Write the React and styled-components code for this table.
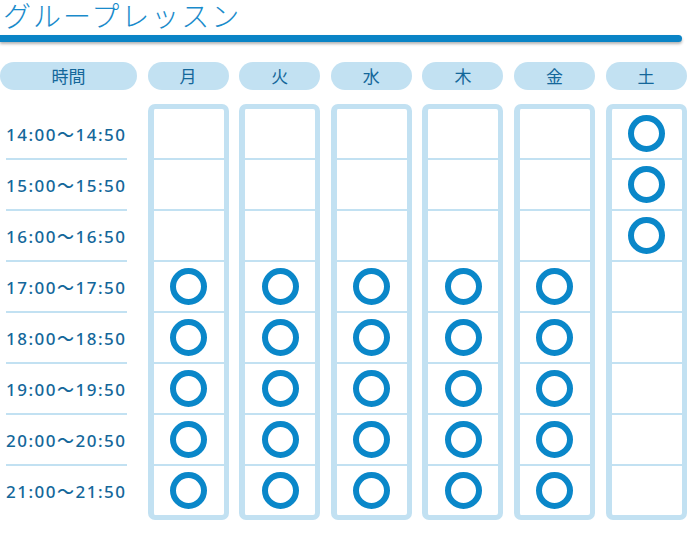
import React from 'react';
import styled, { createGlobalStyle } from 'styled-components';

const GlobalStyle = createGlobalStyle`
	body {
		margin: 0;
		background: #fff;
		font-family: "Noto Sans", "Noto Sans CJK JP", sans-serif;
	}
`;

const LIGHT = '#c2e1f2';
const BLUE = '#0a87c9';
const TEXT = '#14679a';

const Page = styled.div`
	width: 689px;
	height: 534px;
	overflow: hidden;
`;

const Title = styled.h1`
	margin: 0;
	height: 35px;
	padding-left: 3px;
	font-family: "Noto Sans CJK JP", sans-serif;
	font-weight: 300;
	font-size: 28px;
	line-height: 31px;
	letter-spacing: 2px;
	color: #1a8bcb;
	white-space: nowrap;
`;

const Bar = styled.div`
	height: 7px;
	width: 682px;
	background: #0a84c6;
	border-radius: 0 4px 4px 0;
	box-shadow: 0 2px 3px rgba(0, 0, 0, 0.3);
`;

const Grid = styled.div`
	display: grid;
	grid-template-columns: 137px repeat(6, 81px);
	column-gap: 10.6px;
`;

const HeadRow = styled(Grid)`
	margin-top: 20px;
`;

const Pill = styled.div`
	height: 28px;
	border-radius: 14px;
	background: ${LIGHT};
	color: ${TEXT};
	font-family: "Noto Sans CJK JP", sans-serif;
	font-size: 17px;
	line-height: 28px;
	text-align: center;
`;

const Body = styled(Grid)`
	margin-top: 14px;
`;

const TimeCol = styled.div`
	padding: 5px 10px 0 6px;
	display: flex;
	flex-direction: column;
`;

const TimeCell = styled.div`
	height: 49px;
	display: flex;
	align-items: center;
	font-family: "Noto Sans", "Noto Sans CJK JP", sans-serif;
	font-weight: 500;
	font-size: 17px;
	letter-spacing: 1.5px;
	color: ${TEXT};
	white-space: nowrap;
	border-bottom: ${p => (p.$last ? 'none' : `2px solid ${LIGHT}`)};
`;

const DayBox = styled.div`
	border: 5px solid ${LIGHT};
	border-left-width: 6px;
	border-right-width: 5px;
	border-radius: 7px;
	display: flex;
	flex-direction: column;
`;

const Slot = styled.div`
	height: 49px;
	display: flex;
	align-items: center;
	justify-content: center;
	border-bottom: ${p => (p.$last ? 'none' : `2px solid ${LIGHT}`)};
`;

const Ring = styled.span`
	width: 25px;
	height: 25px;
	border: 6px solid ${BLUE};
	border-radius: 50%;
`;

const times = [
	'14:00～14:50',
	'15:00～15:50',
	'16:00～16:50',
	'17:00～17:50',
	'18:00～18:50',
	'19:00～19:50',
	'20:00～20:50',
	'21:00～21:50',
];

const weekday = [false, false, false, true, true, true, true, true];
const saturday = [true, true, true, false, false, false, false, false];

const days = [
	{ name: '月', open: weekday },
	{ name: '火', open: weekday },
	{ name: '水', open: weekday },
	{ name: '木', open: weekday },
	{ name: '金', open: weekday },
	{ name: '土', open: saturday },
];

export default function App() {
	return (
		<Page>
			<GlobalStyle />
			<Title>グループレッスン</Title>
			<Bar />

			<HeadRow>
				<Pill>時間</Pill>
				{days.map(d => (
					<Pill key={d.name}>{d.name}</Pill>
				))}
			</HeadRow>

			<Body>
				<TimeCol>
					{times.map((t, i) => (
						<TimeCell key={t} $last={i === times.length - 1}>
							{t}
						</TimeCell>
					))}
				</TimeCol>
				{days.map(d => (
					<DayBox key={d.name}>
						{d.open.map((on, i) => (
							<Slot key={i} $last={i === d.open.length - 1}>
								{on && <Ring />}
							</Slot>
						))}
					</DayBox>
				))}
			</Body>
		</Page>
	);
}
